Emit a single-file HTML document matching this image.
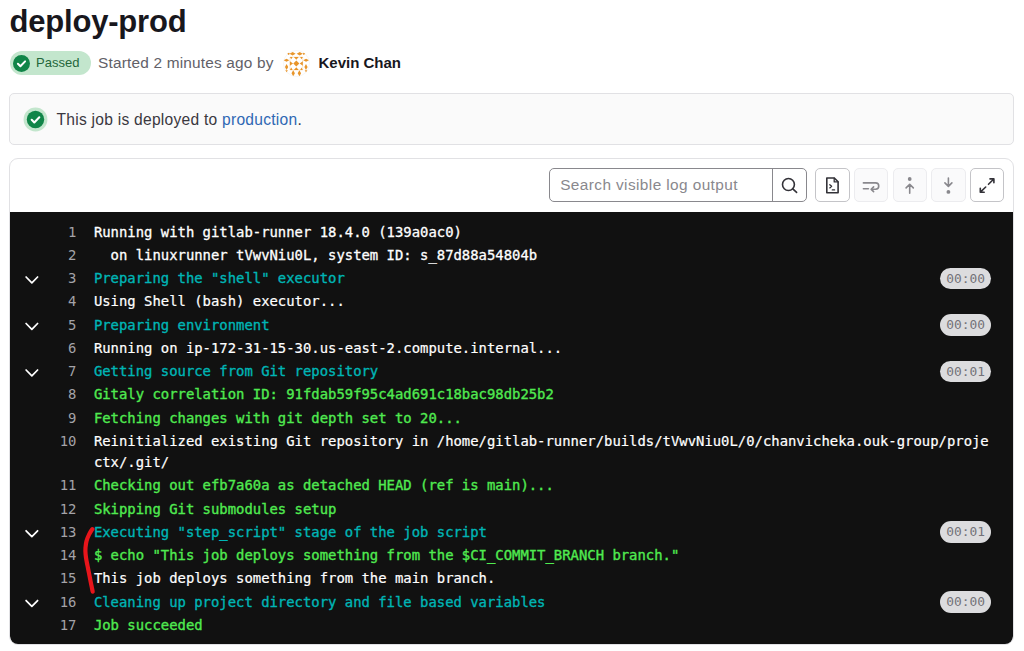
<!DOCTYPE html>
<html lang="en">
<head>
<meta charset="utf-8">
<title>deploy-prod</title>
<style>
*{box-sizing:border-box;margin:0;padding:0}
html,body{width:1024px;height:651px;overflow:hidden;background:#fff}
body{position:relative;font-family:"Liberation Sans",sans-serif;color:#3a383f}
.abs{position:absolute;white-space:nowrap}
.ov{position:absolute;left:0;top:0;pointer-events:none}
h1{position:absolute;left:9.5px;top:4px;font-size:31px;line-height:36px;font-weight:700;color:#18171d;letter-spacing:-0.2px;white-space:nowrap}
.badge{position:absolute;left:9.5px;top:51px;width:81px;height:24px;border-radius:12px;background:#c3e6cd}
.badge .txt{position:absolute;left:26.5px;top:0;line-height:24px;font-size:13px;color:#24663b}
.meta{left:98px;top:52px;line-height:22px;font-size:15.4px;letter-spacing:0.19px;color:#626168}
.avatar{position:absolute;left:283px;top:50px;width:27px;height:27px}
.user{left:318.5px;top:52px;line-height:22px;font-size:15px;font-weight:700;color:#18171d}
.alert{position:absolute;left:9.4px;top:93px;width:1004.4px;height:52px;border:1px solid #e1e1e4;border-radius:5px;background:#fafafa}
.alert .txt{position:absolute;left:46.2px;top:14.5px;line-height:22px;font-size:15.6px;letter-spacing:0.25px;color:#3a383f;white-space:nowrap}
.alert a{color:#2f68b4;text-decoration:none}
.card{position:absolute;left:9.4px;top:158px;width:1004.4px;height:487px;border:1px solid #e1e1e4;border-radius:9px;background:#fff;overflow:hidden}
.log{position:absolute;left:0;top:53px;width:1002.4px;height:433px;background:#111;border-radius:0 0 8px 8px}
.search{position:absolute;left:539px;top:8.5px;width:257.4px;height:34px;border:1px solid #89888d;border-radius:5px;background:#fff}
.search .ph{position:absolute;left:9.8px;top:0;line-height:32px;font-size:15.4px;letter-spacing:0.4px;color:#89888d;white-space:nowrap}
.search .div{position:absolute;left:222px;top:0;width:1px;height:32px;background:#89888d}
.btn{position:absolute;top:8.5px;width:34.3px;height:34px;border:1px solid #c4c4c8;border-radius:5px;background:#fff}
.btn.dis{background:#fafafb;border-color:#ececef}
.btn svg,.search svg{position:absolute;overflow:visible}
.rows{position:absolute;left:0;top:8.57px;width:1002px;font-family:"DejaVu Sans Mono","Liberation Mono",monospace;font-size:13.9px;font-weight:400;color:#fff;-webkit-text-stroke:0.2px currentColor}
.b{-webkit-text-stroke:0.3px currentColor}
.r{position:relative;height:23.25px;line-height:21.3px;white-space:pre}
.r.w{height:44.55px}
.n{position:absolute;top:0.975px;left:25px;width:41px;text-align:right;color:#a4a3a8;font-weight:400;-webkit-text-stroke:0}
.t{position:absolute;top:0.975px;left:83.5px}
.c{color:#00b5b5;-webkit-text-stroke:0.35px currentColor}
.g{color:#50ea50;-webkit-text-stroke:0.35px currentColor}
.d{position:absolute;left:929.3px;top:0.5px;width:51.7px;height:21.7px;border-radius:11px;background:#dcdcde;color:#737278;font-weight:400;font-size:12.9px;line-height:21.7px;text-align:center;-webkit-text-stroke:0}
</style>
</head>
<body>
<h1>deploy-prod</h1>

<div class="badge">
  <svg class="abs" style="left:3px;top:3.5px" width="17" height="17" viewBox="0 0 17 17"><circle cx="8.5" cy="8.5" r="8.5" fill="#108548"/><path d="M4.9 8.7l2.5 2.5 4.7-4.8" fill="none" stroke="#fff" stroke-width="2" stroke-linecap="round" stroke-linejoin="round"/></svg>
  <span class="txt">Passed</span>
</div>
<div class="abs meta">Started 2 minutes ago by</div>
<svg class="avatar" viewBox="0 0 27 27"><circle cx="13.5" cy="13.5" r="13" fill="#fff" stroke="#f0f0f2" stroke-width="0.6"/></svg>
<div class="abs user">Kevin Chan</div>

<div class="alert">
  <svg class="abs" style="left:12.3px;top:12.8px" width="25" height="25" viewBox="0 0 25 25"><circle cx="12.5" cy="12.5" r="11.9" fill="#c3e6cd"/><circle cx="12.5" cy="12.5" r="8.7" fill="#108548"/><path d="M8.7 12.8l2.6 2.6 5-5.1" fill="none" stroke="#fff" stroke-width="2.1" stroke-linecap="round" stroke-linejoin="round"/></svg>
  <span class="txt">This job is deployed to <a>production</a>.</span>
</div>

<div class="card">
  <div class="search"><span class="ph">Search visible log output</span><span class="div"></span></div>
  <div class="btn" style="left:805px"></div>
  <div class="btn dis" style="left:843.7px"></div>
  <div class="btn dis" style="left:882.4px"></div>
  <div class="btn dis" style="left:921px"></div>
  <div class="btn" style="left:959.7px"></div>
  <div class="log">
    <div class="rows">
<div class="r"><span class="n">1</span><span class="t b">Running with gitlab-runner 18.4.0 (139a0ac0)</span></div>
<div class="r"><span class="n">2</span><span class="t b">  on linuxrunner tVwvNiu0L, system ID: s_87d88a54804b</span></div>
<div class="r"><span class="n">3</span><span class="t c">Preparing the "shell" executor</span><span class="d">00:00</span></div>
<div class="r"><span class="n">4</span><span class="t">Using Shell (bash) executor...</span></div>
<div class="r"><span class="n">5</span><span class="t c">Preparing environment</span><span class="d">00:00</span></div>
<div class="r"><span class="n">6</span><span class="t">Running on ip-172-31-15-30.us-east-2.compute.internal...</span></div>
<div class="r"><span class="n">7</span><span class="t c">Getting source from Git repository</span><span class="d">00:01</span></div>
<div class="r"><span class="n">8</span><span class="t g">Gitaly correlation ID: 91fdab59f95c4ad691c18bac98db25b2</span></div>
<div class="r"><span class="n">9</span><span class="t g">Fetching changes with git depth set to 20...</span></div>
<div class="r w"><span class="n">10</span><span class="t">Reinitialized existing Git repository in /home/gitlab-runner/builds/tVwvNiu0L/0/chanvicheka.ouk-group/proje
ctx/.git/</span></div>
<div class="r"><span class="n">11</span><span class="t g">Checking out efb7a60a as detached HEAD (ref is main)...</span></div>
<div class="r"><span class="n">12</span><span class="t g">Skipping Git submodules setup</span></div>
<div class="r"><span class="n">13</span><span class="t c">Executing "step_script" stage of the job script</span><span class="d">00:01</span></div>
<div class="r"><span class="n">14</span><span class="t g">$ echo "This job deploys something from the $CI_COMMIT_BRANCH branch."</span></div>
<div class="r"><span class="n">15</span><span class="t">This job deploys something from the main branch.</span></div>
<div class="r"><span class="n">16</span><span class="t c">Cleaning up project directory and file based variables</span><span class="d">00:00</span></div>
<div class="r"><span class="n">17</span><span class="t g">Job succeeded</span></div>
    </div>
  </div>
</div>

<svg class="ov" width="1024" height="651" viewBox="0 0 1024 651">
  <!-- avatar identicon -->
  <g fill="#e8952a">
    <polygon points="296.3,60.5 299.3,63.5 296.3,66.5 293.3,63.5"/>
    <polygon points="293.9,56.9 298.7,56.9 296.3,59.8"/>
    <polygon points="293.9,70 298.7,70 296.3,67.2"/>
    <polygon points="289.9,61.2 289.9,65.8 293,63.5"/>
    <polygon points="302.8,61.2 302.8,65.8 299.7,63.5"/>
    <polygon points="289.9,56.9 292.6,56.9 291.2,59.3"/>
    <polygon points="300.1,56.9 302.8,56.9 301.5,59.3"/>
    <polygon points="289.9,70 292.6,70 291.2,67.6"/>
    <polygon points="300.1,70 302.8,70 301.5,67.6"/>
    <polygon points="289.6,53.8 292.6,52.1 295.6,53.8 292.6,55.5"/>
    <polygon points="296.7,53.8 299.7,52.1 302.7,53.8 299.7,55.5"/>
    <polygon points="293.2,70.3 294.9,73.2 293.2,76.2 291.5,73.2"/>
    <polygon points="299.4,70.3 301.1,73.2 299.4,76.2 297.7,73.2"/>
    <polygon points="283.7,60.3 286.5,58.8 289.3,60.3 286.5,61.8"/>
    <polygon points="303.3,60.3 306.1,58.8 308.9,60.3 306.1,61.8"/>
    <polygon points="286.6,64 288.2,67 286.6,70 285,67"/>
    <polygon points="306,64 307.6,67 306,70 304.4,67"/>
    <polygon points="285.3,70.3 287.9,70.3 286.6,72.2"/>
    <polygon points="304.7,70.3 307.3,70.3 306,72.2"/>
    <polygon points="288.6,52.8 290,53.8 288.6,55 287.3,53.8"/>
    <polygon points="303.8,52.8 305.2,53.8 303.8,55 302.5,53.8"/>
    <path d="M290 57H302.7M290 70H302.7M290 57V70M302.7 57V70" stroke="#e8952a" stroke-width=".35" opacity=".6" fill="none"/>
  </g>
  <!-- toolbar icons -->
  <g fill="none" stroke="#333238" stroke-width="1.6" stroke-linecap="round" stroke-linejoin="round">
    <circle cx="788.45" cy="184.5" r="5.95"/>
    <path d="M792.8 188.8L796.6 192.4"/>
    <path d="M826.8 178H834.3L838.1 181.8V192.8H826.8Z"/>
    <path d="M834.2 178.2V181.9H837.9" stroke-width="1.3"/>
    <path d="M829.8 184.7L831.6 186.3L829.8 187.9" stroke-width="1.3"/>
    <path d="M832.3 189.9H834.6" stroke-width="1.3"/>
    <path d="M988.5 184.3L993.8 179M990 178.9H993.9V182.8"/>
    <path d="M985.7 187L980.4 192.1M984.2 192.2H980.3V188.3"/>
  </g>
  <g fill="none" stroke="#89888d" stroke-width="1.6" stroke-linecap="round" stroke-linejoin="round">
    <path d="M863.4 182.9H875.6A3.15 3.15 0 0 1 875.6 189.2H871.6"/>
    <path d="M873.6 186.9L871.2 189.3L873.6 191.6"/>
    <path d="M863.4 188.7H868.4"/>
    <path d="M909.7 193.2V184.6M906.1 187.9L909.7 184.3L913.3 187.9"/>
    <path d="M948.4 178V186M944.9 182.9L948.4 186.4L951.9 182.9"/>
  </g>
  <g fill="#89888d"><circle cx="909.7" cy="179" r="1.9"/><circle cx="948.4" cy="191.9" r="1.9"/></g>
  <!-- collapse chevrons -->
  <g fill="none" stroke="#fff" stroke-width="1.75" stroke-linecap="round" stroke-linejoin="round"><path d="M26.1 277.00L31.85 282.80L37.6 277.00"/><path d="M26.1 323.50L31.85 329.30L37.6 323.50"/><path d="M26.1 370.00L31.85 375.80L37.6 370.00"/><path d="M26.1 530.80L31.85 536.60L37.6 530.80"/><path d="M26.1 600.55L31.85 606.35L37.6 600.55"/></g>
  <!-- red annotation -->
  <path d="M92.5 529.2C92.2 529.0 90.1 532.4 89.0 534.6C87.9 536.8 87.1 538.9 86.5 541.1C85.9 543.3 85.7 545.4 85.5 547.6C85.3 549.8 85.4 552.0 85.6 554.2C85.8 556.4 86.1 558.5 86.5 560.7C86.9 562.9 87.4 565.0 87.8 567.2C88.2 569.4 88.7 571.5 89.1 573.7C89.5 575.9 90.0 578.1 90.4 580.3C90.8 582.5 91.3 584.9 91.7 586.8C92.1 588.7 92.5 590.8 92.7 591.6" fill="none" stroke="#e8151b" stroke-width="4.2" stroke-linecap="round" stroke-linejoin="round"/>
</svg>
</body>
</html>
